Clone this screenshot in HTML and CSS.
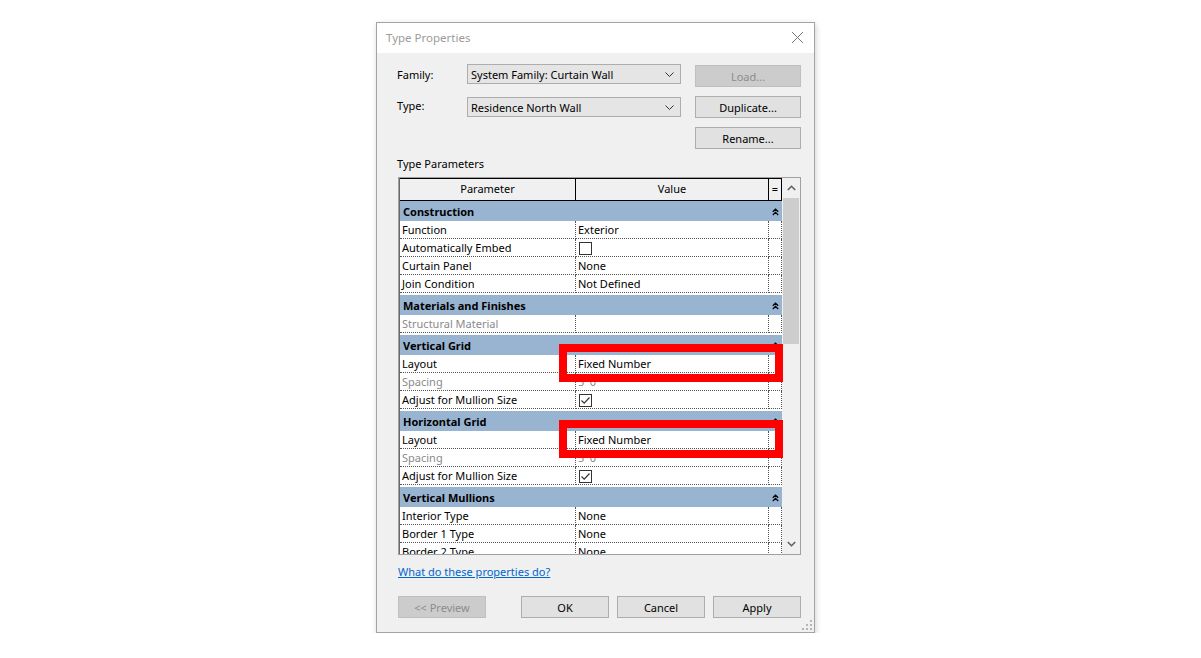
FILE: index.html
```html
<!DOCTYPE html>
<html>
<head>
<meta charset="utf-8">
<link rel="stylesheet" href="styles.css">
</head>
<body>
<div class="dialog">
  <div class="titlebar">
    <span class="title">Type Properties</span>
    <svg class="close" width="13" height="13" viewBox="0 0 13 13"><path d="M1 1 L12 12 M12 1 L1 12" stroke="#777" stroke-width="1" fill="none"/></svg>
  </div>
  <div class="body">
    <div class="toprow">
      <span class="lbl">Family:</span>
      <div class="combo up">System Family: Curtain Wall
        <svg class="caret" width="9" height="5" viewBox="0 0 9 5"><path d="M0.5 0.5 L4.5 4.5 L8.5 0.5" stroke="#333" stroke-width="1" fill="none"/></svg>
      </div>
      <button class="btn disabled side">Load...</button>
    </div>
    <div class="toprow">
      <span class="lbl">Type:</span>
      <div class="combo down">Residence North Wall
        <svg class="caret" width="9" height="5" viewBox="0 0 9 5"><path d="M0.5 0.5 L4.5 4.5 L8.5 0.5" stroke="#333" stroke-width="1" fill="none"/></svg>
      </div>
      <button class="btn side">Duplicate...</button>
    </div>
    <div class="toprow">
      <button class="btn side">Rename...</button>
    </div>
    <div class="section-label">Type Parameters</div>
    <div class="gridbox">
      <div class="table">
        <div class="hdr">
          <div class="hc">Parameter</div>
          <div class="hc">Value</div>
          <div class="hc eq">=</div>
        </div>
        <div class="grp first"><span>Construction</span><svg class="dchev" width="7" height="8" viewBox="0 0 7 8"><path d="M0.8 3.8 L3.5 1.2 L6.2 3.8 M0.8 7 L3.5 4.4 L6.2 7" stroke="#000" stroke-width="1.2" fill="none"/></svg></div>
        <div class="row"><div class="c">Function</div><div class="c">Exterior</div><div class="c"></div></div>
        <div class="row"><div class="c">Automatically Embed</div><div class="c"><span class="chk"></span></div><div class="c"></div></div>
        <div class="row"><div class="c">Curtain Panel</div><div class="c">None</div><div class="c"></div></div>
        <div class="row"><div class="c">Join Condition</div><div class="c">Not Defined</div><div class="c"></div></div>
        <div class="grp"><span>Materials and Finishes</span><svg class="dchev" width="7" height="8" viewBox="0 0 7 8"><path d="M0.8 3.8 L3.5 1.2 L6.2 3.8 M0.8 7 L3.5 4.4 L6.2 7" stroke="#000" stroke-width="1.2" fill="none"/></svg></div>
        <div class="row dim"><div class="c">Structural Material</div><div class="c"></div><div class="c"></div></div>
        <div class="grp"><span>Vertical Grid</span><svg class="dchev" width="7" height="8" viewBox="0 0 7 8"><path d="M0.8 3.8 L3.5 1.2 L6.2 3.8 M0.8 7 L3.5 4.4 L6.2 7" stroke="#000" stroke-width="1.2" fill="none"/></svg></div>
        <div class="row"><div class="c">Layout</div><div class="c">Fixed Number</div><div class="c"></div></div>
        <div class="row dim"><div class="c">Spacing</div><div class="c">5' 0"</div><div class="c"></div></div>
        <div class="row"><div class="c">Adjust for Mullion Size</div><div class="c"><span class="chk"><svg width="11" height="11" viewBox="0 0 11 11"><path d="M1.5 5.5 L4.2 8.2 L9.5 2.5" stroke="#333" stroke-width="1.2" fill="none"/></svg></span></div><div class="c"></div></div>
        <div class="grp"><span>Horizontal Grid</span><svg class="dchev" width="7" height="8" viewBox="0 0 7 8"><path d="M0.8 3.8 L3.5 1.2 L6.2 3.8 M0.8 7 L3.5 4.4 L6.2 7" stroke="#000" stroke-width="1.2" fill="none"/></svg></div>
        <div class="row"><div class="c">Layout</div><div class="c">Fixed Number</div><div class="c"></div></div>
        <div class="row dim"><div class="c">Spacing</div><div class="c">5' 0"</div><div class="c"></div></div>
        <div class="row"><div class="c">Adjust for Mullion Size</div><div class="c"><span class="chk"><svg width="11" height="11" viewBox="0 0 11 11"><path d="M1.5 5.5 L4.2 8.2 L9.5 2.5" stroke="#333" stroke-width="1.2" fill="none"/></svg></span></div><div class="c"></div></div>
        <div class="grp"><span>Vertical Mullions</span><svg class="dchev" width="7" height="8" viewBox="0 0 7 8"><path d="M0.8 3.8 L3.5 1.2 L6.2 3.8 M0.8 7 L3.5 4.4 L6.2 7" stroke="#000" stroke-width="1.2" fill="none"/></svg></div>
        <div class="row"><div class="c">Interior Type</div><div class="c">None</div><div class="c"></div></div>
        <div class="row"><div class="c">Border 1 Type</div><div class="c">None</div><div class="c"></div></div>
        <div class="row"><div class="c">Border 2 Type</div><div class="c">None</div><div class="c"></div></div>
      </div>
      <div class="scrollbar">
        <div class="sarrow"><svg width="9" height="6" viewBox="0 0 9 6"><path d="M0.8 5 L4.5 1.3 L8.2 5" stroke="#606060" stroke-width="1.6" fill="none"/></svg></div>
        <div class="thumb"></div>
        <div class="strack"></div>
        <div class="sarrow"><svg width="9" height="6" viewBox="0 0 9 6"><path d="M0.8 1 L4.5 4.7 L8.2 1" stroke="#606060" stroke-width="1.6" fill="none"/></svg></div>
      </div>
      <div class="redbox box1"></div>
      <div class="redbox box2"></div>
    </div>
    <a class="help" href="#">What do these properties do?</a>
    <div class="bottom">
      <button class="btn disabled wide">&lt;&lt; Preview</button>
      <div class="spacer"></div>
      <button class="btn wide">OK</button>
      <button class="btn wide">Cancel</button>
      <button class="btn wide">Apply</button>
    </div>
    <svg class="grip" width="12" height="12" viewBox="0 0 12 12">
      <rect x="9" y="1" width="2" height="2" fill="#b5b5b5"/>
      <rect x="5" y="5" width="2" height="2" fill="#b5b5b5"/>
      <rect x="9" y="5" width="2" height="2" fill="#b5b5b5"/>
      <rect x="1" y="9" width="2" height="2" fill="#b5b5b5"/>
      <rect x="5" y="9" width="2" height="2" fill="#b5b5b5"/>
      <rect x="9" y="9" width="2" height="2" fill="#b5b5b5"/>
    </svg>
  </div>
</div>
</body>
</html>
```

FILE: styles.css
```css
* { box-sizing: border-box; }
html, body { margin: 0; padding: 0; background: #ffffff; }
body {
  font-family: "Noto Sans", "Open Sans", sans-serif;
  font-size: 11px;
  color: #000;
  padding: 22px 0 0 376px;
}
.dialog {
  width: 439px;
  height: 611px;
  border: 1px solid #a3a3a3;
  box-shadow: 1px 2px 6px rgba(0,0,0,0.18);
  background: #f0f0f0;
  display: flex;
  flex-direction: column;
}
.titlebar {
  height: 30px;
  background: #fff;
  display: flex;
  align-items: center;
  justify-content: space-between;
  padding: 0 10px 2px 9px;
  flex-shrink: 0;
}
.title { color: #9b9b9b; font-size: 11.5px; }
.close { display: block; margin-top: 1px; }
.body {
  position: relative;
  flex: 1;
  padding: 12px 13px 0 20px;
}
.toprow {
  display: flex;
  align-items: flex-start;
  height: 22px;
  margin-bottom: 9px;
  justify-content: flex-end;
}
.lbl { width: 70px; line-height: 20px; flex-shrink: 0; }
.combo {
  position: relative;
  width: 214px;
  height: 20px;
  border: 1px solid #adadad;
  background: #e5e5e5;
  padding-left: 3px;
  line-height: 19px;
  white-space: nowrap;
}
.combo.up { margin-top: -1px; }
.combo.down { margin-top: 1px; }
.combo .caret { position: absolute; right: 6px; top: 7px; }
.btn {
  font-family: inherit;
  font-size: 11px;
  color: #000;
  background: #e1e1e1;
  border: 1px solid #adadad;
  height: 22px;
  padding: 0;
  margin: 0;
}
.btn.side { width: 106px; margin-left: 14px; }
.btn.disabled { background: #cccccc; border-color: #bfbfbf; color: #8d8d8d; }
.section-label { margin-top: -2px; height: 16px; line-height: 16px; margin-bottom: 5px; }
.gridbox {
  position: relative;
  width: 403px;
  height: 378px;
  border: 1px solid #a0a0a0;
  margin-left: 1px;
  display: flex;
  background: #fff;
}
.table {
  width: 383px;
  height: 376px;
  overflow: hidden;
  background: #fff;
  border-left: 1px solid #696969;
  flex-shrink: 0;
}
.table > div { display: grid; grid-template-columns: 176px 193px 13px; }
.hdr { height: 23px; background: #f0f0f0; }
.hc {
  border-top: 1px solid #000;
  border-right: 1px solid #000;
  border-bottom: 1px solid #000;
  text-align: center;
  line-height: 20px;
}
.grp {
  height: 20px;
  background: #99b4d1;
  font-weight: bold;
  align-items: center;
  margin-top: 2px;
}
.grp.first { margin-top: 0; }
.grp span { grid-column: 1 / 3; padding-left: 3px; line-height: 20px; margin-top: 1px; }
.grp .dchev { justify-self: center; }
.row { height: 18px; }
.row .c {
  border-bottom: 1px dotted #555;
  border-right: 1px dotted #555;
  padding-left: 2px;
  line-height: 17px;
  white-space: nowrap;
  overflow: hidden;
}
.row.dim .c { color: #8a8a8a; }
.chk {
  display: inline-block;
  width: 13px;
  height: 13px;
  border: 1px solid #333;
  background: #fff;
  vertical-align: middle;
  margin-top: -2px;
  margin-left: 1px;
}
.chk svg { display: block; }
.scrollbar {
  width: 18px;
  height: 376px;
  background: #f0f0f0;
  display: flex;
  flex-direction: column;
  align-items: center;
}
.sarrow { height: 20px; width: 100%; display: flex; align-items: center; justify-content: center; flex-shrink: 0; }
.thumb { width: 16px; height: 146px; background: #cdcdcd; flex-shrink: 0; }
.strack { flex: 1; }
.redbox {
  position: absolute;
  border: 8px solid #ff0000;
  width: 224px;
  height: 38px;
  left: 160px;
}
.box1 { top: 166px; }
.box2 { top: 242px; }
.help {
  display: block;
  margin-top: 9px;
  margin-left: 1px;
  width: max-content;
  color: #0066cc;
  text-decoration: underline;
  line-height: 16px;
}
.bottom {
  display: flex;
  gap: 8px;
  margin-top: 16px;
  margin-left: 1px;
  width: 403px;
}
.spacer { flex: 1; }
.btn.wide { width: 88px; }
.grip { position: absolute; right: 1px; bottom: 1px; }
```
